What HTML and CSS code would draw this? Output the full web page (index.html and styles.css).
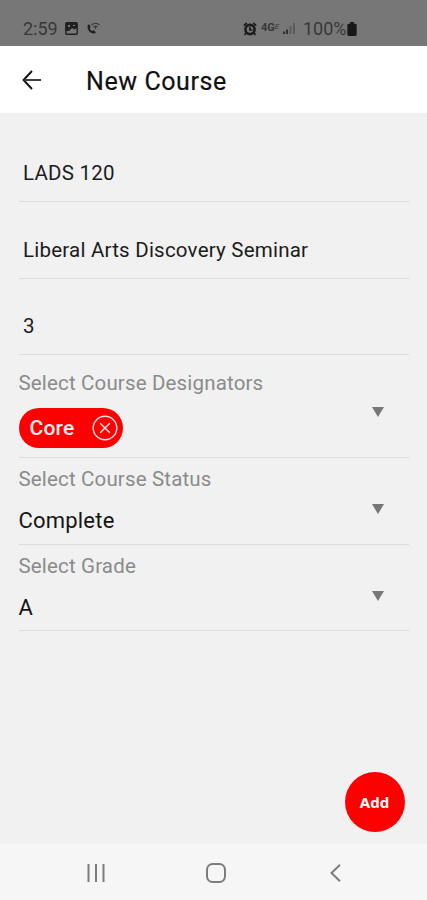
FILE: index.html
```html
<!DOCTYPE html>
<html lang="en">
<head>
<meta charset="utf-8">
<title>New Course</title>
<link rel="stylesheet" href="styles.css">
</head>
<body>
<div class="status">
  <span class="time">2:59</span>
  <svg class="s-image" width="13" height="13" viewBox="0 0 13 13"><rect x=".8" y=".8" width="11.4" height="11.4" rx="1" fill="none" stroke="#202020" stroke-width="1.4"/><path d="M1 1h11v5L9.500 7.500 7 6 4 9 1 9z" fill="#202020"/><path d="M3 3h2v2H3zM8 3h2v1H8z" fill="#777"/></svg>
  <svg class="s-call" width="14" height="13" viewBox="0 0 14 13"><path d="M1.800 3C.5 7 4 12 8.500 11.500l1.500-1.300-2.200-2-1.500.8C5 8.500 4 7.500 3.700 6L4.800 5 3.200 2.200z" fill="#202020"/><path d="M5.500 3Q9.500-.5 13.500 3M7.500 5q2-1.800 4 0M9.500 5v2" fill="none" stroke="#383838" stroke-width="1.200"/></svg>
  <svg class="s-alarm" width="14" height="14" viewBox="0 0 14 14"><circle cx="7" cy="7.500" r="4.600" fill="none" stroke="#1c1c1c" stroke-width="2.600"/><path d="M.8 3.600 3.800 1M13.200 3.600 10.200 1M3 11l-1.500 2M11 11l1.500 2M7 5v3h2.500" fill="none" stroke="#1c1c1c" stroke-width="1.700"/></svg>
  <span class="net"><b>4G</b><i>E</i></span>
  <svg class="s-signal" width="13" height="13" viewBox="0 0 13 13"><path d="M1 12V9.500M4 12V7.500" stroke="#303030" stroke-width="2"/><path d="M7.500 12V4M11 12V1" stroke="#5c5c5c" stroke-width="2"/></svg>
  <span class="percent">100%</span>
  <svg class="s-battery" width="10" height="14" viewBox="0 0 10 15"><path d="M3 0h4v2h1.500Q10 2 10 3.500v10Q10 15 8.500 15h-7Q0 15 0 13.500v-10Q0 2 1.500 2H3z" fill="#181818"/></svg>
</div>
<header class="bar">
  <svg class="back" width="20" height="20" viewBox="0 0 20 20"><path d="M10 1 1.500 10l8.500 9" fill="none" stroke="#111" stroke-width="1.900"/><path d="M1.500 10H19" stroke="#333" stroke-width="1.900"/></svg>
  <h1>New Course</h1>
</header>
<main>
  <div class="field">LADS 120</div>
  <div class="field">Liberal Arts Discovery Seminar</div>
  <div class="field field-credits">3</div>
  <section class="select select-tags">
    <div class="label">Select Course Designators</div>
    <div class="tag"><span>Core</span><svg width="26" height="26" viewBox="0 0 26 26"><circle cx="13" cy="13" r="11.800" fill="none" stroke="#ffe4e4" stroke-width="1.400"/><path d="m8.200 8.200 9.600 9.600m0-9.600-9.600 9.600" stroke="#ffe4e4" stroke-width="1.500"/></svg></div>
    <svg class="caret" width="12" height="10" viewBox="0 0 12 10"><path d="M0 0h12L6 10z"/></svg>
  </section>
  <section class="select">
    <div class="label">Select Course Status</div>
    <div class="value">Complete</div>
    <svg class="caret" width="12" height="10" viewBox="0 0 12 10"><path d="M0 0h12L6 10z"/></svg>
  </section>
  <section class="select select-last">
    <div class="label">Select Grade</div>
    <div class="value">A</div>
    <svg class="caret" width="12" height="10" viewBox="0 0 12 10"><path d="M0 0h12L6 10z"/></svg>
  </section>
  <button class="add">Add</button>
</main>
<nav>
  <svg width="18" height="18" viewBox="0 0 18 18"><path d="M1.500 0v18M9 0v18M16.500 0v18"/></svg>
  <svg class="home" width="20" height="20" viewBox="0 0 20 20"><rect x="1" y="1" width="18" height="18" rx="5.500"/></svg>
  <svg width="11" height="18" viewBox="0 0 11 18"><path d="M10 .8 1.500 9l8.500 8.200"/></svg>
</nav>
</body>
</html>
```
FILE: styles.css
```css
* { box-sizing: border-box; }
body {
  margin: 0;
  height: 900px;
  display: flex;
  flex-direction: column;
  background: #f1f1f1;
  color: #1c1c1c;
  font-family: Roboto, sans-serif;
  overflow: hidden;
}
svg { display: block; flex: none; }
.status {
  height: 46px;
  padding: 11px 0 0 23px;
  background: #777;
  display: flex;
  align-items: center;
  color: #383838;
  font-size: 18px;
  line-height: 20px;
}
.time { width: 42px; }
.s-call { margin-left: 8px; }
.s-alarm { margin-left: 143px; }
.net {
  width: 22px;
  margin: 0 0 2px 4px;
  display: flex;
  font-size: 11px;
  line-height: 12px;
}
.net i { font-size: 8px; line-height: 9px; }
.s-signal { width: 13px; }
.percent { width: 43px; margin-left: 7px; }
.s-battery { margin-left: 1px; }
.bar {
  height: 67px;
  background: #fff;
  display: flex;
  align-items: center;
  padding-left: 22px;
}
.bar h1 {
  margin: 4px 0 0 44px;
  font-size: 25px;
  font-weight: 400;
  line-height: 30px;
  letter-spacing: .58px;
  color: #111;
  -webkit-text-stroke: .2px #111;
}
main {
  flex: 1;
  padding: 12px 18px 0 19px;
  display: flex;
  flex-direction: column;
}
.field {
  height: 77px;
  padding: 35px 0 0 4px;
  border-bottom: 1px solid #dcdcdc;
  font-size: 20.500px;
  line-height: 26px;
  letter-spacing: .22px;
}
.field-credits { height: 76px; padding-top: 34px; }
.select {
  position: relative;
  height: 87px;
  padding-top: 8px;
  border-bottom: 1px solid #dcdcdc;
}
.select-tags { height: 103px; padding-top: 15px; }
.select-last { height: 86px; }
.label { font-size: 20.500px; line-height: 26px; letter-spacing: .16px; margin-left: -.5px; color: #8b8b8b; }
.value { font-size: 22px; line-height: 28px; letter-spacing: .2px; margin: 15px 0 0 -.5px; color: #151515; }
.caret { position: absolute; right: 25px; top: 46px; fill: #777; }
.select-tags .caret { top: 52px; }
.tag {
  width: 104px;
  height: 40px;
  margin: 11.500px 0 0 -.5px;
  padding: 0 5px 0 11px;
  border-radius: 20px;
  background: #f00;
  color: #fff0f0;
  font-size: 21px;
  font-weight: 500;
  letter-spacing: .2px;
  display: flex;
  align-items: center;
  justify-content: space-between;
}
.add {
  width: 60px;
  height: 60px;
  margin: auto 4.500px 12px auto;
  padding: 0;
  border: 0;
  border-radius: 50%;
  background: #f00;
  color: #fff;
  font: 700 15px/20px "Noto Sans", sans-serif;
}
nav {
  height: 56px;
  padding: 2px 86px 0 87px;
  background: #f6f6f6;
  display: flex;
  justify-content: space-between;
  align-items: center;
}
nav svg { fill: none; stroke: #7d7d7d; stroke-width: 2; }
nav .home { margin-right: 3px; }
```
